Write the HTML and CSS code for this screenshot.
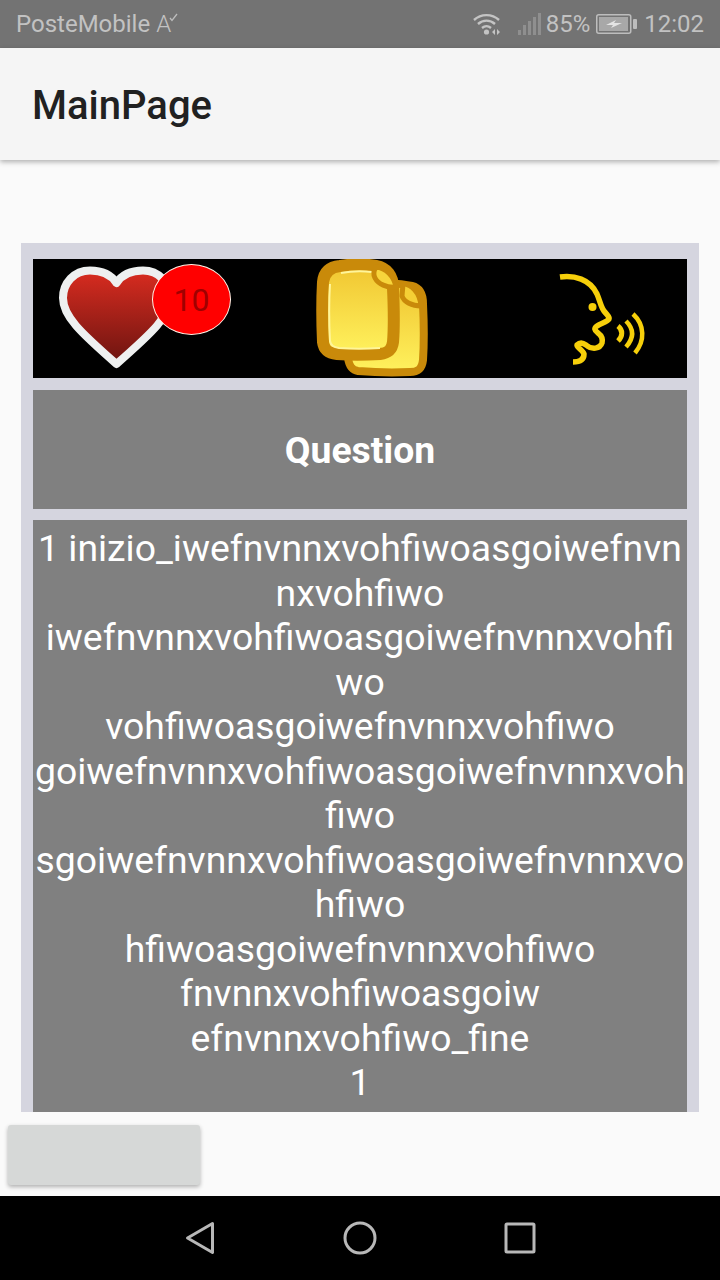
FILE: index.html
```html
<!DOCTYPE html>
<html>
  <head>
    <title>MainPage</title>
    <link rel="stylesheet" href="styles.css">
  </head>
  <body>
    <div class="status-bar">
      <div class="status-left">
        <span>PosteMobile</span>
        <span class="volte">A<svg class="volte-check" width="9" height="9" viewBox="0 0 9 9"><path d="M1 5 L3 7.5 L8 1" fill="none" stroke="#bdbdbd" stroke-width="1.3"/></svg></span>
      </div>
      <div class="status-right">
        <svg class="wifi" width="30" height="24" viewBox="0 0 30 24">
          <g fill="none" stroke="#c4c4c4" stroke-width="2.4">
            <path d="M2 8 C9 1.5 20 1.5 27 8"/>
            <path d="M6 12 C11 7.5 18 7.5 23 12"/>
            <path d="M10 16 C13 13.5 16 13.5 19 16"/>
          </g>
          <circle cx="14.5" cy="20" r="2.6" fill="#c4c4c4"/>
          <path d="M20 20 L23 17 L23 23 Z M25 17 L28 20 L25 23 Z" fill="#c4c4c4"/>
        </svg>
        <svg class="signal" width="24" height="24" viewBox="0 0 24 24">
          <g fill="#8f8f8f">
            <rect x="0" y="18" width="3" height="5"/>
            <rect x="5" y="13" width="3" height="10"/>
            <rect x="10" y="9" width="3" height="14"/>
            <rect x="15" y="5" width="3" height="18"/>
            <rect x="20" y="1" width="3" height="22"/>
          </g>
        </svg>
        <span class="percent">85%</span>
        <svg class="battery" width="41" height="20" viewBox="0 0 41 20">
          <rect x="0.75" y="0.75" width="34" height="18.5" rx="2" fill="none" stroke="#bdbdbd" stroke-width="1.5"/>
          <rect x="3" y="3" width="29" height="14" fill="#a8a8a8"/>
          <rect x="37" y="5" width="4" height="10" rx="1" fill="#bdbdbd"/>
          <path d="M10 11 L20 6 L18 9 L26 9 L15 14 L17 11 Z" fill="#e4e4e4"/>
        </svg>
        <span class="clock">12:02</span>
      </div>
    </div>

    <div class="toolbar">MainPage</div>

    <div class="content">
      <div class="card">
        <div class="icon-row">
          <div class="icon-cell">
            <svg width="218" height="119" viewBox="33 259 218 119">
              <defs>
                <linearGradient id="heartFill" x1="0" y1="0" x2="0" y2="1">
                  <stop offset="0" stop-color="#d92c20"/>
                  <stop offset="1" stop-color="#6b1410"/>
                </linearGradient>
              </defs>
              <path d="M116.5 283 C110 273 99 270.5 90 270.5 C74 270.5 63 283 63 298 C63 316 80 332 116.5 364 C153 332 170 316 170 298 C170 283 159 270.5 143 270.5 C134 270.5 123 273 116.5 283 Z" fill="url(#heartFill)" stroke="#eef0f0" stroke-width="8" stroke-linejoin="round"/>
            </svg>
            <div class="badge">10</div>
          </div>
          <div class="icon-cell">
            <svg width="218" height="119" viewBox="251 259 218 119">
              <defs>
                <linearGradient id="docFill" x1="0" y1="0" x2="0" y2="1">
                  <stop offset="0" stop-color="#f0c530"/>
                  <stop offset="1" stop-color="#fff25e"/>
                </linearGradient>
              </defs>
              <path d="M356 284 C375 282 400 283 412 286 C420 288 423 294 423 304 C424 325 424 345 423 360 C422 369 418 372 410 372 C390 373 370 372 358 371 C351 370 349 365 348 358 Z" fill="url(#docFill)" stroke="#c98a0a" stroke-width="8" stroke-linejoin="round"/>
              <path d="M403 284 C411 284 420 292 421 306 C412 306 404 302 402 296 Z" fill="#f5cf35" stroke="#c98a0a" stroke-width="5" stroke-linejoin="round"/>
              <path d="M340 266 C352 264 365 264 376 266 C387 268 393 276 393 288 C394 310 394 330 393 342 C392 350 388 353 380 354 C364 355 350 355 337 354 C328 353 324 350 323 342 C322 320 322 300 323 282 C324 272 330 267 340 266 Z" fill="url(#docFill)" stroke="#c98a0a" stroke-width="12" stroke-linejoin="round"/>
              <path d="M341 273 C352 271 362 271 372 272 M330 284 C329 300 329 322 330 341 C331 346 334 347 339 348 C352 349 366 349 380 348" fill="none" stroke="#fff59a" stroke-width="2"/>
              <path d="M376 267 C386 268 394 276 396 287 C387 288 378 284 375 278 C373 274 374 270 376 267 Z" fill="#f7d53c" stroke="#c98a0a" stroke-width="5" stroke-linejoin="round"/>
            </svg>
          </div>
          <div class="icon-cell">
            <svg width="218" height="119" viewBox="469 259 218 119">
              <g fill="none" stroke="#f6cf0a" stroke-width="5.5" stroke-linejoin="round">
                <path d="M560 277 C574 275 590 279 597 294 C600 301 601 307 604 311 C607 315 610 317 609 319 C607 322 601 323 597 326 C594 328 594 330 598 333 C602 336 603 339 602 343 C600 349 592 350 586 345 C582 342 579 343 577 345 C576 347 583 350 584 354 C584 359 581 362 573 362"/>
                <path d="M633 314 C645 325 645 341 635 353" stroke-width="4.5"/>
                <path d="M626 321 C634 329 634 338 626 347" stroke-width="4.5"/>
                <path d="M618 326 C623 330 623 336 618 341" stroke-width="5"/>
              </g>
              <circle cx="592.5" cy="307" r="4" fill="#f6cf0a"/>
            </svg>
          </div>
        </div>
        <div class="question">Question</div>
        <div class="answer">
          1 inizio_iwefnvnnxvohfiwoasgoiwefnvn<br>
          nxvohfiwo<br>
          iwefnvnnxvohfiwoasgoiwefnvnnxvohfi<br>
          wo<br>
          vohfiwoasgoiwefnvnnxvohfiwo<br>
          goiwefnvnnxvohfiwoasgoiwefnvnnxvoh<br>
          fiwo<br>
          sgoiwefnvnnxvohfiwoasgoiwefnvnnxvo<br>
          hfiwo<br>
          hfiwoasgoiwefnvnnxvohfiwo<br>
          fnvnnxvohfiwoasgoiw<br>
          efnvnnxvohfiwo_fine<br>
          1
        </div>
      </div>
    </div>

    <div class="bottom-area">
      <button class="action-button" type="button"></button>
    </div>

    <div class="nav-bar">
      <svg width="36" height="36" viewBox="0 0 36 36"><path d="M30.5 3.5 L5.5 18 L30.5 32.5 Z" fill="none" stroke="#b8b8b8" stroke-width="3" stroke-linejoin="round"/></svg>
      <svg width="36" height="36" viewBox="0 0 36 36"><circle cx="18" cy="18" r="15" fill="none" stroke="#b8b8b8" stroke-width="3"/></svg>
      <svg width="36" height="36" viewBox="0 0 36 36"><rect x="4" y="4" width="28" height="28" rx="1" fill="none" stroke="#b8b8b8" stroke-width="3"/></svg>
    </div>
  </body>
</html>
```

FILE: styles.css
```css
html, body {
  margin: 0;
  padding: 0;
}

body {
  width: 720px;
  height: 1280px;
  display: flex;
  flex-direction: column;
  overflow: hidden;
  background-color: #fafafa;
  font-family: Roboto, sans-serif;
}

.status-bar {
  height: 48px;
  flex: none;
  display: flex;
  justify-content: space-between;
  align-items: center;
  padding: 0 16px 0 16px;
  background-color: #737373;
  color: #c2c2c2;
  font-size: 24px;
}

.status-left,
.status-right {
  display: flex;
  align-items: center;
}

.volte {
  position: relative;
  margin-left: 6px;
  font-weight: 300;
}

.volte-check {
  position: absolute;
  top: 3px;
  left: 13px;
}

.wifi {
  margin-right: 16px;
}

.signal {
  margin-right: 4px;
}

.battery {
  margin: 0 7px 0 6px;
}

.toolbar {
  height: 112px;
  flex: none;
  display: flex;
  align-items: center;
  padding: 2px 0 0 32px;
  box-sizing: border-box;
  background-color: #f5f5f5;
  box-shadow: 0 2px 5px rgba(0, 0, 0, 0.3);
  color: #212121;
  font-size: 40px;
  font-weight: 500;
  position: relative;
}

.content {
  height: 952px;
  flex: none;
  box-sizing: border-box;
  padding: 83px 21px 0;
}

.card {
  height: 869px;
  box-sizing: border-box;
  padding: 16px 12px 0;
  display: flex;
  flex-direction: column;
  overflow: hidden;
  background-color: #d5d5df;
}

.icon-row {
  height: 119px;
  flex: none;
  display: flex;
  background-color: #000;
}

.icon-cell {
  width: 218px;
  position: relative;
}

.icon-cell svg {
  display: block;
}

.badge {
  position: absolute;
  left: 119px;
  top: 5px;
  width: 77px;
  height: 69px;
  border: 1.5px solid #fff4e8;
  border-radius: 50%;
  display: flex;
  align-items: center;
  justify-content: center;
  background-color: #ff0000;
  color: #a00000;
  font-size: 32px;
}

.question {
  height: 119px;
  flex: none;
  margin-top: 12px;
  display: flex;
  align-items: center;
  justify-content: center;
  background-color: #808080;
  color: #fff;
  font-size: 37.33px;
  font-weight: 700;
}

.answer {
  margin-top: 11px;
  flex: 1;
  padding-top: 6px;
  background-color: #808080;
  color: #fff;
  font-size: 37.33px;
  line-height: 44.5px;
  text-align: center;
  white-space: nowrap;
}

.bottom-area {
  height: 84px;
  flex: none;
  padding: 13px 0 0 8px;
  box-sizing: border-box;
}

.action-button {
  display: block;
  width: 192px;
  height: 60px;
  padding: 0;
  border: none;
  border-radius: 3px;
  background-color: #d6d8d7;
  box-shadow: 0 2px 4px rgba(0, 0, 0, 0.3);
}

.nav-bar {
  height: 84px;
  flex: none;
  display: flex;
  align-items: center;
  justify-content: center;
  gap: 124px;
  background-color: #000;
}
```
